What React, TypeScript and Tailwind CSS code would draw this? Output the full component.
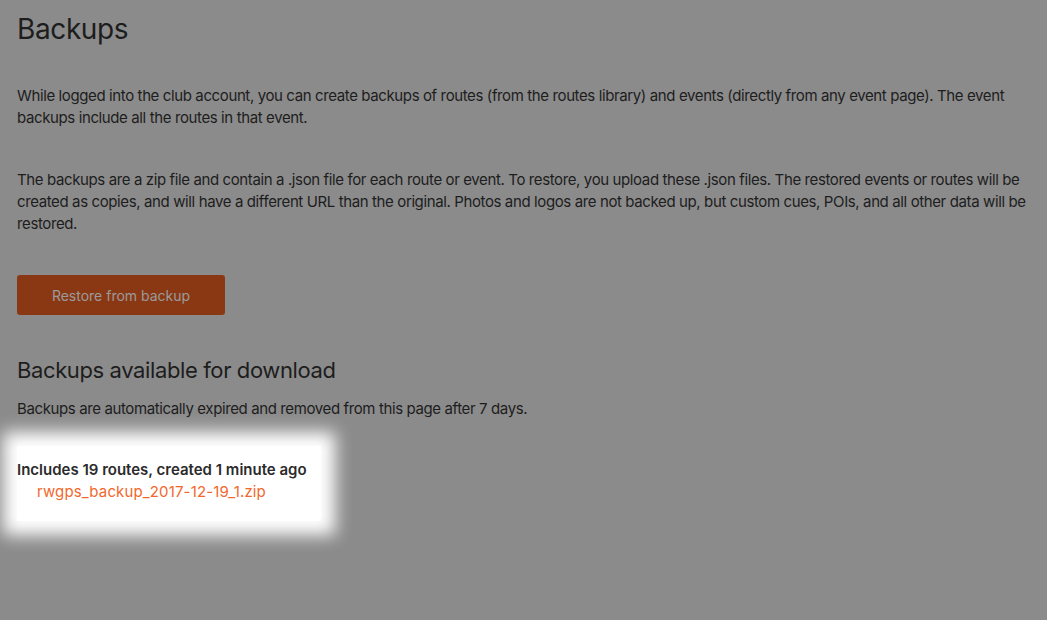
export default function App() {
  return (
    <div className="min-h-[620px] w-full bg-[#8b8b8b] font-['Inter',sans-serif] tracking-[-0.024em] text-[#1d1d1d]">
      <div className="px-[17px] pt-[12px]">
        <h1 className="text-[28px] leading-[34px] font-normal">Backups</h1>

        <p className="mt-[39px] text-[15px] leading-[22px]">
          While logged into the club account, you can create backups of routes (from the routes
          library) and events (directly from any event page). The event backups include all the
          routes in that event.
        </p>

        <p className="mt-[40px] text-[15px] leading-[22px]">
          The backups are a zip file and contain a .json file for each route or event. To restore,
          you upload these .json files. The restored events or routes will be created as copies,
          and will have a different URL than the original. Photos and logos are not backed up, but
          custom cues, POIs, and all other data will be restored.
        </p>

        <button className="mt-[40px] flex h-[40px] w-[208px] items-center justify-center rounded-[3px] bg-[#8a3814] text-[14px] tracking-normal text-[#9b9b9b]">
          Restore from backup
        </button>

        <h2 className="mt-[41px] text-[22px] leading-[28px] font-normal">
          Backups available for download
        </h2>
        <p className="mt-[14px] text-[15px] leading-[22px]">
          Backups are automatically expired and removed from this page after 7 days.
        </p>

        <div className="mt-[26px] w-[304px] bg-white pt-[13px] pb-[18px] tracking-normal shadow-[0_0_16px_14px_#ffffff]">
          <div className="text-[15px] leading-[22px] font-semibold text-[#2b2b2b]">
            Includes 19 routes, created 1 minute ago
          </div>
          <a className="ml-[20px] block text-[15px] leading-[22px] tracking-[0.01em] text-[#f2672c]" href="#">
            rwgps_backup_2017-12-19_1.zip
          </a>
        </div>
      </div>
    </div>
  );
}
